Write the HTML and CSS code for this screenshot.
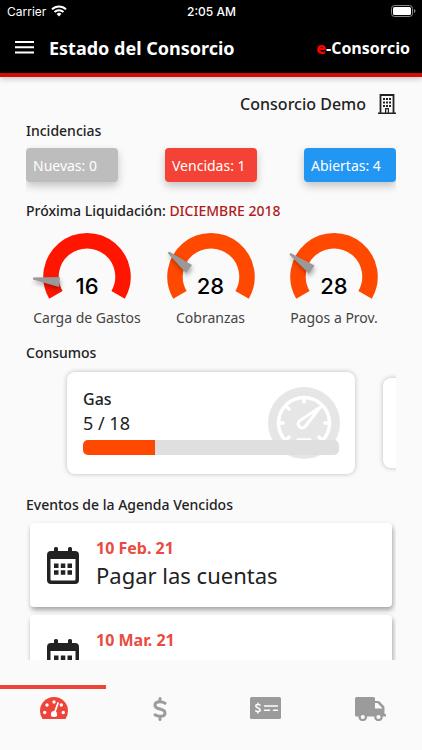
FILE: index.html
```html
<!DOCTYPE html>
<html lang="es">
<head>
<meta charset="utf-8">
<meta name="viewport" content="width=device-width, initial-scale=1">
<title>Estado del Consorcio</title>
<link rel="stylesheet" href="styles.css">
</head>
<body>
<header class="top">
  <div class="status">
    <span class="carrier">Carrier
      <svg width="16" height="12" viewBox="0 0 16 12" fill="none" stroke="#fff" stroke-width="2"><path d="M1 4.400a10 10 0 0 1 14 0M3.500 7a6.400 6.400 0 0 1 9 0"/><path d="M8 11.500 5.600 9a3.400 3.400 0 0 1 4.800 0z" fill="#fff" stroke="none"/></svg>
    </span>
    <span class="clock">2:05 AM</span>
    <svg class="battery" width="25" height="12" viewBox="0 0 25 12"><rect x=".5" y=".5" width="21" height="11" rx="3" fill="none" stroke="#888"/><rect x="2" y="2" width="18" height="8" rx="1.5" fill="#fff"/><path d="M23 4v4q1.500-.5 1.500-2T23 4z" fill="#888"/></svg>
  </div>
  <div class="appbar">
    <button class="menu" aria-label="Menú"><svg width="19" height="13" viewBox="0 0 19 13" fill="#fff"><path d="M0 0h19v2H0zM0 5.300h19v2H0zM0 10.600h19v2H0z"/></svg></button>
    <h1>Estado del Consorcio</h1>
    <span class="brand"><b>e</b>-Consorcio</span>
  </div>
</header>

<main>
  <div class="building">
    <span>Consorcio Demo</span>
    <svg width="18" height="20" viewBox="0 0 18 20"><path d="M2.500 19V1h13v18" fill="none" stroke="#222" stroke-width="1.800"/><path d="M0 18.400h18V20H0zM5 4h2v2H5zM8 4h2v2H8zM11 4h2v2h-2zM5 7.500h2v2H5zM8 7.500h2v2H8zM11 7.500h2v2h-2zM5 11h2v2H5zM8 11h2v2H8zM11 11h2v2h-2zM7 14.500h1.300V19H7zM9.800 14.500H11V19H9.800zM7 14h4v1.300H7z" fill="#222"/></svg>
  </div>

  <h2>Incidencias</h2>
  <div class="chips">
    <button class="chip gray">Nuevas: 0</button>
    <button class="chip red">Vencidas: 1</button>
    <button class="chip blue">Abiertas: 4</button>
  </div>

  <h2>Próxima Liquidación: <span class="month">DICIEMBRE 2018</span></h2>
  <div class="gauges">
    <figure class="gauge">
      <svg viewBox="0 0 108 68"><path d="M22.900 61.800A36 36 0 1 1 85.100 61.800" fill="none" stroke="#ff1500" stroke-width="15.500"/><path class="needle" d="M0 44.500 27 44 26 54 0 46.500z"/></svg>
      <strong>16</strong>
      <figcaption>Carga de Gastos</figcaption>
    </figure>
    <figure class="gauge">
      <svg viewBox="0 0 108 68"><path d="M22.900 61.800A36 36 0 1 1 85.100 61.800" fill="none" stroke="#ff4800" stroke-width="15.500"/><path class="needle" d="M12 18.500 35 32 29 40 10.800 20.200z"/></svg>
      <strong>28</strong>
      <figcaption>Cobranzas</figcaption>
    </figure>
    <figure class="gauge">
      <svg viewBox="0 0 108 68"><path d="M22.900 61.800A36 36 0 1 1 85.100 61.800" fill="none" stroke="#ff4800" stroke-width="15.500"/><path class="needle" d="M10.500 20 34.500 32.500 29 40.500 9.500 21.700z"/></svg>
      <strong>28</strong>
      <figcaption>Pagos a Prov.</figcaption>
    </figure>
  </div>

  <h2>Consumos</h2>
  <div class="carousel">
    <article class="usage">
      <svg class="meter" width="72" height="72" viewBox="0 0 72 72"><circle cx="36" cy="36" r="36" fill="#e6e6e6"/><g fill="none" stroke="#fff" stroke-width="3.500" stroke-linecap="round"><circle cx="36" cy="36" r="25.500"/><path d="M36 11v4M11 36h4M57 36h4M18.500 19.500l2.500 2.500M18.500 52.500l2.500-2.500M53.500 52.500 51 50M30 53h12"/><path d="M52.500 20 32 33.500a4 4 0 1 0 5.500 5.500z" stroke-linejoin="round" stroke-width="3"/></g></svg>
      <h3>Gas</h3>
      <p>5 / 18</p>
      <div class="track"><div class="fill" style="width:28%"></div></div>
    </article>
    <article class="usage next" aria-hidden="true"></article>
  </div>

  <h2>Eventos de la Agenda Vencidos</h2>
  <div class="events">
    <article class="event">
      <svg width="32" height="37" viewBox="0 0 32 37"><path d="M4 4h3V1.500Q7 0 8.500 0h1Q11 0 11 1.500V4h10V1.500Q21 0 22.500 0h1Q25 0 25 1.500V4h3q4 0 4 4v25q0 4-4 4H4q-4 0-4-4V8q0-4 4-4zM3.500 12v20.500q0 1 1 1h23q1 0 1-1V12z" fill="#222" fill-rule="evenodd"/><path d="M7 16.500h4.500V21H7zM13.800 16.500h4.500V21h-4.500zM20.500 16.500H25V21h-4.500zM7 23.300h4.500v4.500H7zM13.800 23.300h4.500v4.500h-4.500zM20.500 23.300H25v4.500h-4.500z" fill="#222"/></svg>
      <div class="event-text"><time>10 Feb. 21</time><p>Pagar las cuentas</p></div>
    </article>
    <article class="event">
      <svg width="32" height="37" viewBox="0 0 32 37"><path d="M4 4h3V1.500Q7 0 8.500 0h1Q11 0 11 1.500V4h10V1.500Q21 0 22.500 0h1Q25 0 25 1.500V4h3q4 0 4 4v25q0 4-4 4H4q-4 0-4-4V8q0-4 4-4zM3.500 12v20.500q0 1 1 1h23q1 0 1-1V12z" fill="#222" fill-rule="evenodd"/><path d="M7 16.500h4.500V21H7zM13.800 16.500h4.500V21h-4.500zM20.500 16.500H25V21h-4.500zM7 23.300h4.500v4.500H7zM13.800 23.300h4.500v4.500h-4.500zM20.500 23.300H25v4.500h-4.500z" fill="#222"/></svg>
      <div class="event-text"><time>10 Mar. 21</time><p>Pagar a proveedor</p></div>
    </article>
  </div>
</main>

<nav class="tabs">
  <a class="active" href="#estado" aria-label="Estado"><svg width="28" height="22" viewBox="0 0 28 22"><path d="M2.500 22Q0 18.500 0 14a14 14 0 0 1 28 0q0 4.500-2.500 8z" fill="#ef443a"/><g fill="#fff"><circle cx="4.700" cy="15.500" r="1.700"/><circle cx="7" cy="8" r="1.700"/><circle cx="14" cy="5" r="1.700"/><circle cx="21.300" cy="8" r="1.700"/><circle cx="23.300" cy="15.500" r="1.700"/><circle cx="14" cy="17" r="3"/></g><path d="M14.500 16 18 6" stroke="#fff" stroke-width="1.800" stroke-linecap="round"/><path d="M11 18.500h6" stroke="#fff" stroke-width="1.500"/></svg></a>
  <a href="#pagos" aria-label="Pagos"><svg width="14" height="24" viewBox="0 0 14 24" fill="none" stroke="#9b9b9b" stroke-width="3" stroke-linecap="round"><path d="M12 6.200Q9.500 4.800 7 4.800q-5 0-5 3.400 0 2.600 5 3.800t5 3.900q0 3.400-5 3.400-3 0-5-1.500M7 1.500v3M7 20v2.500"/></svg></a>
  <a href="#cheques" aria-label="Cheques"><svg width="31" height="22" viewBox="0 0 31 22"><rect width="31" height="22" rx="1.500" fill="#9b9b9b"/><g fill="none" stroke="#fff" stroke-width="1.500" stroke-linecap="round"><path d="M10 8.200Q9 7.600 8 7.600q-2.200 0-2.200 1.500Q5.800 10.300 8 11t2.200 2q0 1.500-2.200 1.500-1.300 0-2.200-.7M8 6.200v1M8 15v1"/><path d="M14.500 9h13M14.500 13.300h5M23.500 13.300h4"/></g></svg></a>
  <a href="#proveedores" aria-label="Proveedores"><svg width="31" height="24" viewBox="0 0 31 24"><path d="M1.500 0h17Q20 0 20 1.500V4h3q1 0 1.800.8l3.900 4q.8.800.8 2V17h1q.5 0 .5.500v1.500q0 .5-.5.500H1.500Q0 19.500 0 18V1.500Q0 0 1.500 0z" fill="#9b9b9b"/><path d="M20 6v5.500h7.200V11L22.500 6z" fill="#fafafa"/><g fill="#fafafa" stroke="#9b9b9b" stroke-width="2.200"><circle cx="7.800" cy="20" r="3.200"/><circle cx="23.500" cy="20" r="3.200"/></g></svg></a>
</nav>
</body>
</html>
```
FILE: styles.css
```css
* { box-sizing: border-box; margin: 0; padding: 0; }
body {
  display: flex;
  flex-direction: column;
  height: 100vh;
  overflow: hidden;
  background: #fafafa;
  color: #222;
  font-family: "Noto Sans", "Open Sans", sans-serif;
}
svg { display: block; flex: none; }
button { border: 0; font: inherit; color: inherit; background: none; }

.top {
  background: #000;
  color: #fff;
  border-bottom: 4px solid #d50a0a;
  box-shadow: 0 2px 6px rgba(0, 0, 0, .2);
}
.status {
  display: grid;
  grid-template-columns: 1fr auto 1fr;
  align-items: center;
  height: 22px;
  padding: 0 6px 0 7px;
  font-family: Inter, sans-serif;
  font-size: 12px;
}
.carrier { display: flex; align-items: center; gap: 5px; }
.clock { font-weight: 500; font-size: 12px; }
.battery { justify-self: end; }
.appbar {
  display: flex;
  align-items: center;
  height: 51px;
  padding: 0 12px 0 15px;
}
.menu { padding: 0; }
h1 { flex: 1; margin-left: 15px; font-size: 18px; font-weight: 700; }
.brand { font-family: "Open Sans", sans-serif; font-size: 16px; font-weight: 700; }
.brand b { color: #f00; }

main {
  flex: 1;
  min-height: 0;
  display: flex;
  flex-direction: column;
  padding: 13px 26px 0;
}
.building {
  display: flex;
  justify-content: flex-end;
  align-items: center;
  gap: 12px;
  height: 28px;
  font-size: 16px;
  font-weight: 500;
}
h2 { flex: none; font-size: 14px; font-weight: 500; line-height: 25px; }
.month { color: #b01c1c; }

.chips {
  flex: none;
  display: flex;
  justify-content: space-between;
  overflow: hidden;
  padding: 5px 0 16px;
}
.chip {
  width: 92px;
  height: 34px;
  padding-left: 7px;
  border-radius: 4px;
  color: #fff;
  font-size: 14px;
  text-align: left;
  white-space: nowrap;
  box-shadow: 0 4px 8px rgba(0, 0, 0, .22);
}
.gray { background: #bdbdbd; }
.red { background: #f44336; }
.blue { background: #2196f3; }

.gauges {
  flex: none;
  display: flex;
  justify-content: space-between;
  padding: 10px 8px 11px 7px;
}
.gauge {
  display: flex;
  flex-direction: column;
  align-items: center;
  width: 108px;
}
.gauge svg { width: 108px; height: 68px; overflow: visible; }
.needle { fill: #999; filter: drop-shadow(1px 3px 2px rgba(0, 0, 0, .3)); }
.gauge strong {
  margin-top: -28px;
  color: #000;
  font: 500 22px/26px Inter, sans-serif;
}
.gauge figcaption { margin-top: 8px; font-size: 14px; line-height: 22px; white-space: nowrap; color: #444; }

.carousel {
  flex: none;
  display: flex;
  align-items: center;
  gap: 28px;
  overflow: hidden;
  padding: 7px 0 18px 41px;
}
.usage {
  position: relative;
  flex: 0 0 calc(100% - 41px);
  height: 102px;
  padding: 15px 16px;
  border-radius: 8px;
  background: #fff;
  box-shadow: 0 0 5px rgba(0, 0, 0, .25);
}
.next { height: 90px; }
.meter { position: absolute; right: 15px; top: 15px; }
.usage h3 { font-size: 16px; font-weight: 500; line-height: 24px; }
.usage p { font-size: 18px; line-height: 24px; }
.track {
  position: relative;
  height: 15px;
  margin-top: 5px;
  border-radius: 5px;
  background: #dfdfdf;
  overflow: hidden;
}
.fill { height: 100%; background: #ff4800; }

.events {
  flex: 1;
  min-height: 0;
  display: flex;
  flex-direction: column;
  gap: 8px;
  overflow: hidden;
  padding: 6px 4px 0;
}
.event {
  flex: none;
  display: flex;
  align-items: center;
  gap: 17px;
  height: 84px;
  padding: 0 17px;
  border-radius: 4px;
  background: #fff;
  box-shadow: 1px 3px 5px rgba(0, 0, 0, .35);
}
.event-text { padding-bottom: 4px; }
.event time { display: block; color: #e84c40; font-size: 16px; font-weight: 700; line-height: 24px; }
.event p { font-size: 22px; line-height: 30px; }

.tabs { flex: none; display: flex; height: 90px; }
.tabs a {
  flex: 1;
  display: flex;
  justify-content: center;
  align-items: flex-start;
  margin-top: 25px;
  padding: 8px 0 0 3px;
  border-top: 4px solid transparent;
}
.tabs .active { border-color: #ef443a; }
```
